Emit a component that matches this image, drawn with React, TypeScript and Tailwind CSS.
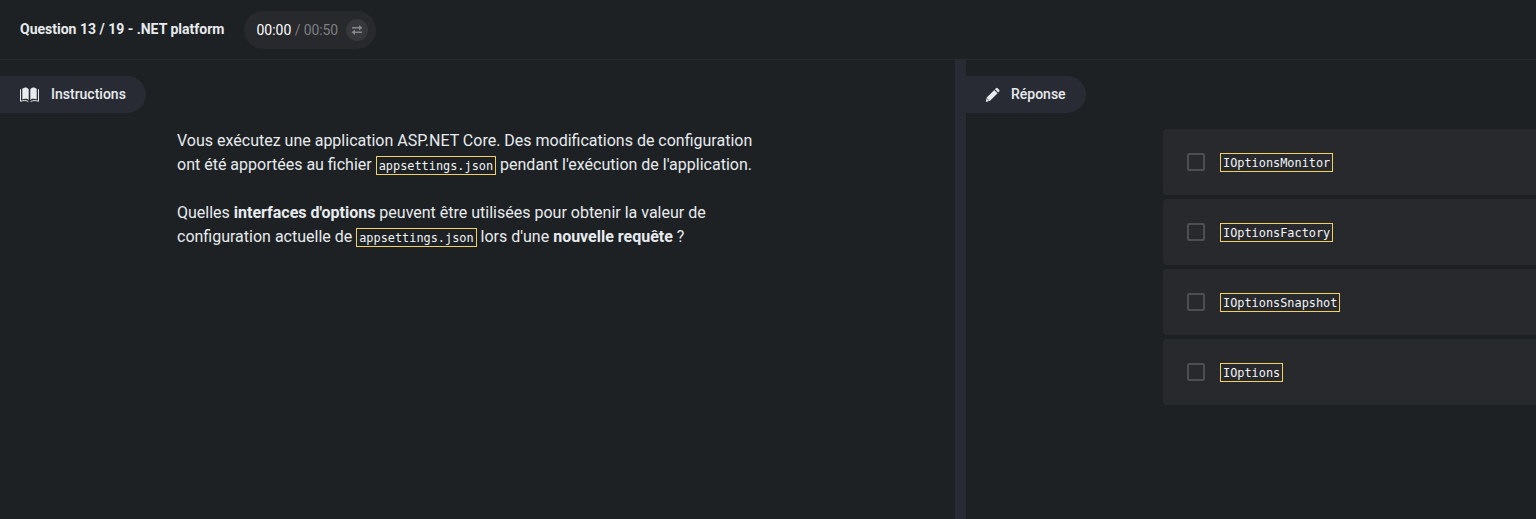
import React from "react";

function Code({ children }: { children: React.ReactNode }) {
  return (
    <code className="inline-block h-[19px] border border-[#f0d264] px-[2px] align-baseline font-['DejaVu_Sans_Mono',monospace] text-[11.88px] leading-[19px] text-[#f2f4f5]">
      {children}
    </code>
  );
}

function BookIcon() {
  return (
    <svg width="19" height="16" viewBox="0 0 19 16" fill="#e8ebee">
      <path d="M2.300 1.800C3.500 1 5 .5 6 .5C7.200 .9 8.200 1.600 8.700 2.400V13.200C7.500 11.700 5.500 11.300 2.300 12.300ZM16.700 1.800C15.500 1 14 .5 13 .5C11.800 .9 10.800 1.600 10.300 2.400V13.200C11.500 11.700 13.500 11.300 16.700 12.300Z" />
      <path d="M.5 2.300V14.300C3.500 13.200 6.200 13.400 8.300 14.500M18.500 2.300V14.300C15.500 13.200 12.800 13.400 10.700 14.500" fill="none" stroke="#e8ebee" strokeWidth="1" />
    </svg>
  );
}

function PencilIcon() {
  return (
    <svg width="14" height="16" viewBox="0 0 14 16" fill="#e8ebee" className="overflow-visible">
      <path d="M1.700 10.500 9.300 2.900 12.600 6.200 5 13.800 .8 15ZM10 2.200 11.200 1.100Q11.900 .6 12.600 1.200L14.300 2.900Q14.900 3.600 14.300 4.300L13.300 5.500Z" />
      <path d="M1.700 11.300 4.300 13.900" stroke="#282b33" strokeWidth=".6" />
    </svg>
  );
}

function SwapIcon() {
  return (
    <svg width="12" height="10" viewBox="0 0 12 10" fill="#85878b">
      <path d="M1 2H8V0L11.500 2.800 8 5.500V3.600H1ZM11 6.400H4V4.500L.5 7.200 4 10V8H11Z" />
    </svg>
  );
}

function Tab({ icon, label }: { icon: React.ReactNode; label: string }) {
  return (
    <div className="flex h-[37px] w-fit items-center rounded-r-full bg-[#282b33] pr-5 pl-5 text-[14px] font-medium">
      {icon}
      <span className="ml-3">{label}</span>
    </div>
  );
}

const answers = ["IOptionsMonitor", "IOptionsFactory", "IOptionsSnapshot", "IOptions"];

export default function App() {
  return (
    <div className="flex h-[519px] flex-col overflow-hidden bg-[#1d2124] font-[Roboto,sans-serif] text-[#e8ebee]">
      <header className="flex h-[60px] shrink-0 items-center border-b border-[#282b2e] pl-5">
        <h1 className="text-[14px] font-bold">Question 13 / 19 - .NET platform</h1>
        <div className="ml-5 flex h-[38px] w-[132px] items-center rounded-full bg-[#28292d] pl-3 text-[14px]">
          <span className="pt-px text-white">00:00</span>
          <span className="pt-px tracking-[-0.1px] whitespace-pre text-[#7d7f83]"> / 00:50</span>
          <span className="ml-2 flex size-[22px] items-center justify-center rounded-full bg-[#37383c]">
            <SwapIcon />
          </span>
        </div>
      </header>
      <main className="flex min-h-0 flex-1">
        <section className="w-[955px] shrink-0 pt-4">
          <Tab icon={<BookIcon />} label="Instructions" />
          <div className="ml-[177px] pt-4 text-[16px] leading-6 whitespace-nowrap">
            <p className="h-6">Vous exécutez une application ASP.NET Core. Des modifications de configuration</p>
            <p className="h-6">ont été apportées au fichier <Code>appsettings.json</Code> pendant l'exécution de l'application.</p>
            <p className="mt-6 h-6">Quelles <b>interfaces d'options</b> peuvent être utilisées pour obtenir la valeur de</p>
            <p className="h-6">configuration actuelle de <Code>appsettings.json</Code> lors d'une <b>nouvelle requête</b> ?</p>
          </div>
        </section>
        <div className="w-[11px] shrink-0 bg-[#282b33]" />
        <section className="min-w-0 flex-1 pt-4">
          <div className="-ml-px">
            <Tab icon={<PencilIcon />} label="Réponse" />
          </div>
          <div className="mt-4 ml-[197px] flex flex-col gap-1">
            {answers.map((answer) => (
              <label key={answer} className="flex h-[66px] items-center rounded-l-[4px] bg-[#28292d] pl-6">
                <span className="mr-[15px] size-[18px] rounded-[2px] border-2 border-[#4d4e52]" />
                <Code>{answer}</Code>
              </label>
            ))}
          </div>
        </section>
      </main>
    </div>
  );
}
